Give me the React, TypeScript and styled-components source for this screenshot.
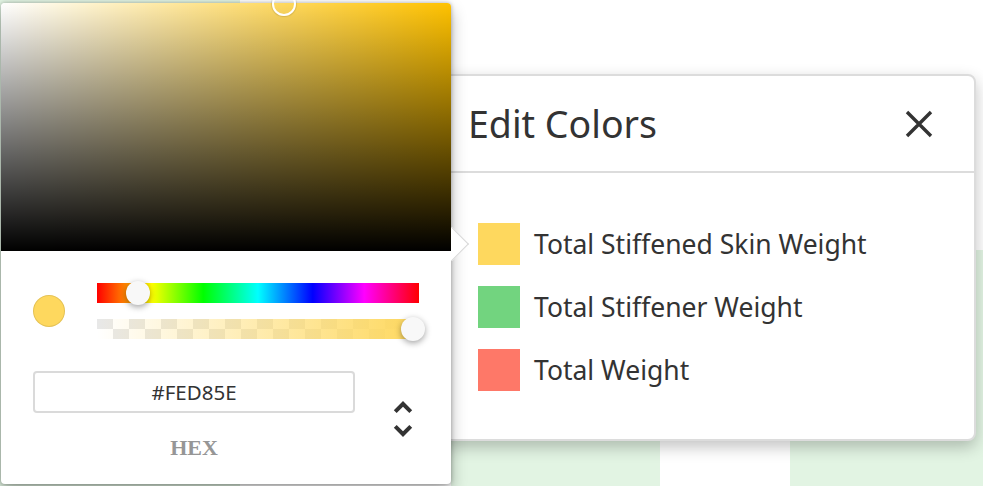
import React from "react";
import styled, { createGlobalStyle } from "styled-components";

const GlobalStyle = createGlobalStyle`
  html, body { margin: 0; padding: 0; background: #fff; }
  body { font-family: "Noto Sans", "Open Sans", sans-serif; }
  #root { width: 983px; height: 486px; }
`;

const Stage = styled.div`
  position: relative;
  width: 983px;
  height: 486px;
  overflow: hidden;
  background: #fff;
`;

/* ---------- background chart ---------- */
const Chart = styled.div`
  display: flex;
  align-items: flex-end;
  height: 100%;
`;

const Bar = styled.div<{ $w: number; $h: number; $empty?: boolean }>`
  flex: 0 0 ${(p) => p.$w}px;
  height: ${(p) => p.$h}px;
  background: ${(p) => (p.$empty ? "transparent" : "#e2f4e3")};
`;

/* ---------- Edit Colors dialog ---------- */
const Dialog = styled.section`
  position: absolute;
  top: 74px;
  left: 440px;
  width: 536px;
  height: 367px;
  box-sizing: border-box;
  background: #fff;
  border: 2px solid #dcdcdc;
  border-radius: 8px;
  box-shadow: 0 6px 16px rgba(0, 0, 0, 0.24);
  display: flex;
  flex-direction: column;
`;

const DialogHeader = styled.header`
  height: 97px;
  box-sizing: border-box;
  border-bottom: 2px solid #dcdcdc;
  display: flex;
  align-items: center;
  justify-content: space-between;
  padding: 0 41px 0 26px;
`;

const Title = styled.h2`
  margin: 0;
  font-size: 37.5px;
  font-weight: 400;
  color: #333;
`;

const CloseButton = styled.button`
  border: none;
  background: none;
  padding: 0;
  width: 28px;
  height: 28px;
  display: flex;
  cursor: pointer;
`;

const DialogBody = styled.div`
  display: flex;
  flex-direction: column;
  gap: 21px;
  padding: 50px 0 0 36px;
`;

const SeriesRow = styled.div`
  display: flex;
  align-items: center;
  gap: 14px;
  height: 42px;
`;

const SeriesSwatch = styled.div<{ $color: string }>`
  flex: 0 0 42px;
  height: 42px;
  background: ${(p) => p.$color};
`;

const SeriesName = styled.span`
  font-size: 26.5px;
  color: #333;
  white-space: nowrap;
`;

/* ---------- color picker popover ---------- */
const Picker = styled.div`
  position: absolute;
  top: 3px;
  left: 1px;
  width: 450px;
  background: #fff;
  border-radius: 4px;
  box-shadow: 0 0 4px rgba(0, 0, 0, 0.3), 0 8px 16px rgba(0, 0, 0, 0.3);
`;

const Arrow = styled.div`
  position: absolute;
  z-index: 1;
  top: 229px;
  right: -13px;
  width: 24px;
  height: 24px;
  box-sizing: border-box;
  background: #fff;
  border-top: 1px solid #d8d8d8;
  border-right: 1px solid #d8d8d8;
  transform: rotate(45deg);
`;

const Saturation = styled.div<{ $hue: number }>`
  position: relative;
  z-index: 2;
  height: 248px;
  border-radius: 4px 4px 0 0;
  background: linear-gradient(to top, #000, rgba(0, 0, 0, 0)),
    linear-gradient(to right, #fff, rgba(255, 255, 255, 0)),
    hsl(${(p) => p.$hue}, 100%, 50%);
`;

const SatPointer = styled.div`
  position: absolute;
  width: 24px;
  height: 24px;
  border-radius: 50%;
  transform: translate(-12px, -12px);
  box-shadow: inset 0 0 0 2px #fff, 0 0 1px 1px rgba(0, 0, 0, 0.12);
`;

const PickerBody = styled.div`
  padding: 32px 32px 25px;
`;

const Controls = styled.div`
  display: flex;
`;

const ColorCol = styled.div`
  flex: 0 0 64px;
`;

const ActiveSwatch = styled.div<{ $color: string }>`
  margin-top: 12px;
  width: 32px;
  height: 32px;
  border-radius: 50%;
  background: ${(p) => p.$color};
  box-shadow: inset 0 0 0 1px rgba(0, 0, 0, 0.1);
`;

const Sliders = styled.div`
  flex: 1;
  display: flex;
  flex-direction: column;
  gap: 16px;
`;

const HueTrack = styled.div`
  position: relative;
  height: 20px;
  background: linear-gradient(
    to right,
    #f00 0%,
    #ff0 17%,
    #0f0 33%,
    #0ff 50%,
    #00f 67%,
    #f0f 83%,
    #f00 100%
  );
`;

const AlphaTrack = styled.div<{ $rgb: string }>`
  position: relative;
  height: 20px;
  background: linear-gradient(to right, rgba(${(p) => p.$rgb}, 0), rgb(${(p) => p.$rgb})),
    repeating-conic-gradient(#fff 0 25%, #e8e8e8 0 50%) 0 0 / 32px 20px;
`;

const Thumb = styled.div`
  position: absolute;
  top: 0;
  width: 24px;
  height: 24px;
  border-radius: 50%;
  background: #f8f8f8;
  box-shadow: 0 2px 6px rgba(0, 0, 0, 0.37);
  transform: translate(-12px, -2px);
`;

const Fields = styled.div`
  display: flex;
  padding-top: 32px;
`;

const Field = styled.div`
  flex: 1;
`;

const HexInput = styled.input`
  box-sizing: border-box;
  display: block;
  width: 100%;
  height: 42px;
  padding: 0;
  border: none;
  border-radius: 4px;
  outline: none;
  background: #fff;
  box-shadow: inset 0 0 0 2px #dadada;
  font-family: "Noto Sans", sans-serif;
  font-size: 20.5px;
  color: #333;
  text-align: center;
`;

const FieldLabel = styled.label`
  display: block;
  margin-top: 24px;
  font-family: "Liberation Serif", "Times New Roman", serif;
  font-weight: 700;
  font-size: 22px;
  line-height: 22px;
  color: #969696;
  text-align: center;
  text-transform: uppercase;
`;

const ToggleCol = styled.div`
  flex: 0 0 64px;
  display: flex;
  justify-content: flex-end;
`;

const ToggleIcon = styled.svg`
  margin-top: 24px;
  margin-right: -8px;
  width: 48px;
  height: 48px;
  flex: 0 0 48px;
`;

const series = [
  { name: "Total Stiffened Skin Weight", color: "#FED85E" },
  { name: "Total Stiffener Weight", color: "#72D47F" },
  { name: "Total Weight", color: "#FE7868" },
];

const active = { r: 254, g: 216, b: 94, a: 0.98 };

function toHsv(r: number, g: number, b: number) {
  const max = Math.max(r, g, b);
  const min = Math.min(r, g, b);
  const d = max - min;
  let h = 0;
  if (d !== 0) {
    if (max === r) h = 60 * (((g - b) / d) % 6);
    else if (max === g) h = 60 * ((b - r) / d + 2);
    else h = 60 * ((r - g) / d + 4);
  }
  if (h < 0) h += 360;
  return { h, s: max === 0 ? 0 : d / max, v: max / 255 };
}

export default function App() {
  const hsv = toHsv(active.r, active.g, active.b);
  const trackWidth = 322;
  const hex = "#FED85E";
  const rgb = `${active.r}, ${active.g}, ${active.b}`;

  return (
    <>
      <GlobalStyle />
      <Stage>
        <Chart>
          <Bar $w={240} $h={486} />
          <Bar $w={211} $h={0} $empty />
          <Bar $w={209} $h={236} />
          <Bar $w={130} $h={0} $empty />
          <Bar $w={193} $h={236} />
        </Chart>

        <Dialog>
          <DialogHeader>
            <Title>Edit Colors</Title>
            <CloseButton aria-label="Close">
              <svg width="28" height="28" viewBox="0 0 28 28">
                <path d="M2 2 L26 26 M26 2 L2 26" stroke="#333" strokeWidth="3.4" fill="none" />
              </svg>
            </CloseButton>
          </DialogHeader>
          <DialogBody>
            {series.map((s) => (
              <SeriesRow key={s.name}>
                <SeriesSwatch $color={s.color} />
                <SeriesName>{s.name}</SeriesName>
              </SeriesRow>
            ))}
          </DialogBody>
        </Dialog>

        <Picker>
          <Arrow />
          <Saturation $hue={hsv.h}>
            <SatPointer style={{ left: `${hsv.s * 100}%`, top: `${(1 - hsv.v) * 100}%` }} />
          </Saturation>
          <PickerBody>
            <Controls>
              <ColorCol>
                <ActiveSwatch $color={hex} />
              </ColorCol>
              <Sliders>
                <HueTrack>
                  <Thumb style={{ left: `${(hsv.h / 360) * trackWidth}px` }} />
                </HueTrack>
                <AlphaTrack $rgb={rgb}>
                  <Thumb style={{ left: `${active.a * trackWidth}px` }} />
                </AlphaTrack>
              </Sliders>
            </Controls>
            <Fields>
              <Field>
                <HexInput id="hex" defaultValue={hex} />
                <FieldLabel htmlFor="hex">hex</FieldLabel>
              </Field>
              <ToggleCol>
                <ToggleIcon viewBox="0 0 24 24">
                  <path
                    fill="#333"
                    d="M12,18.17L8.83,15L7.42,16.41L12,21L16.59,16.41L15.17,15M12,5.83L15.17,9L16.58,7.59L12,3L7.41,7.59L8.83,9L12,5.83Z"
                  />
                </ToggleIcon>
              </ToggleCol>
            </Fields>
          </PickerBody>
        </Picker>
      </Stage>
    </>
  );
}
